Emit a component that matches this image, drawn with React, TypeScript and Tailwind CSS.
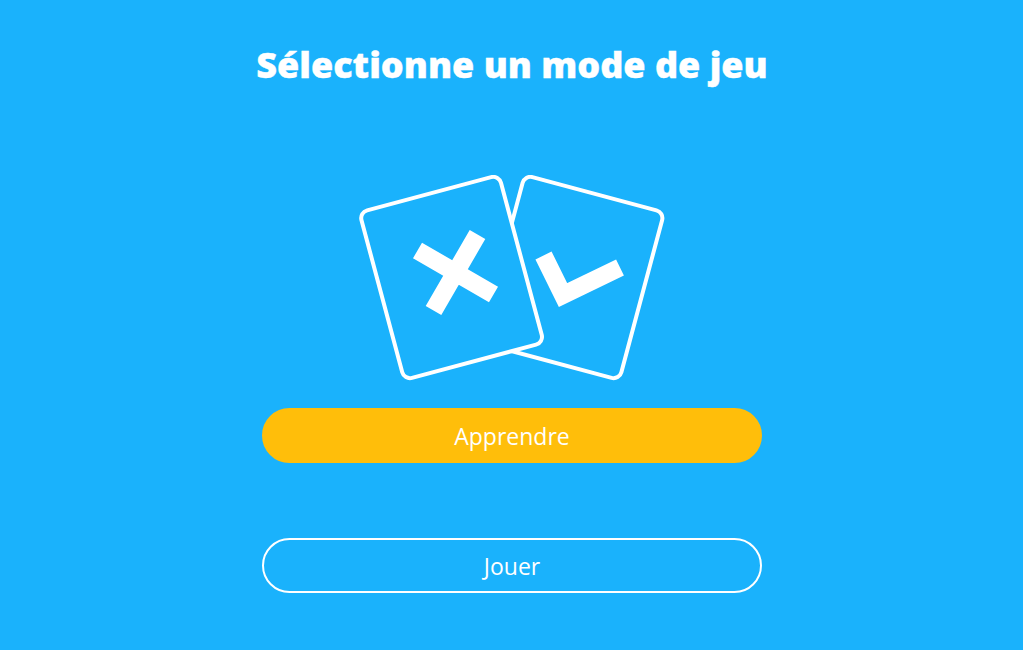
interface ModeButtonProps {
  label: string;
  variant: "filled" | "outline";
}

function ModeButton({ label, variant }: ModeButtonProps) {
  const getVariant = () => {
    switch (variant) {
      case "filled":
        return "border-[#ffbe0a] bg-[#ffbe0a]";
      default:
        return "border-white bg-transparent";
    }
  };

  return (
    <button
      className={`flex h-[55px] w-[500px] items-center justify-center rounded-full border-2 pt-px pl-px text-[23px] leading-none text-white ${getVariant()}`}
    >
      {label}
    </button>
  );
}

function CardsIllustration() {
  return (
    <svg width="306" height="206" viewBox="359 175 306 206" fill="none" className="mt-[86px]">
      {/* back card */}
      <g transform="rotate(15 572 277.5)">
        <rect x="499.8" y="190.8" width="144.4" height="173.4" rx="8" stroke="white" strokeWidth="4" />
      </g>
      {/* front card */}
      <g transform="rotate(-15 451.6 277.5)">
        <rect x="379.4" y="190.8" width="144.4" height="173.4" rx="8" fill="#1ab2fc" stroke="white" strokeWidth="4" />
      </g>
      <path d="M417.5 250.5 493.5 294.5M477.5 234.5 433.5 310.5" stroke="white" strokeWidth="18" />
      <path d="M543.5 255.5 563 295 620 267.5" stroke="white" strokeWidth="18" />
    </svg>
  );
}

export default function App() {
  return (
    <main className="flex h-[650px] w-full flex-col items-center bg-[#1ab2fc] font-['Open_Sans',sans-serif] text-white">
      <h1 className="mt-[41px] pl-px text-4xl leading-[48px] font-extrabold [-webkit-text-stroke:0.4px_white]">
        Sélectionne un mode de jeu
      </h1>
      <CardsIllustration />
      <div className="mt-[27px] flex flex-col gap-[75px]">
        <ModeButton label="Apprendre" variant="filled" />
        <ModeButton label="Jouer" variant="outline" />
      </div>
    </main>
  );
}
